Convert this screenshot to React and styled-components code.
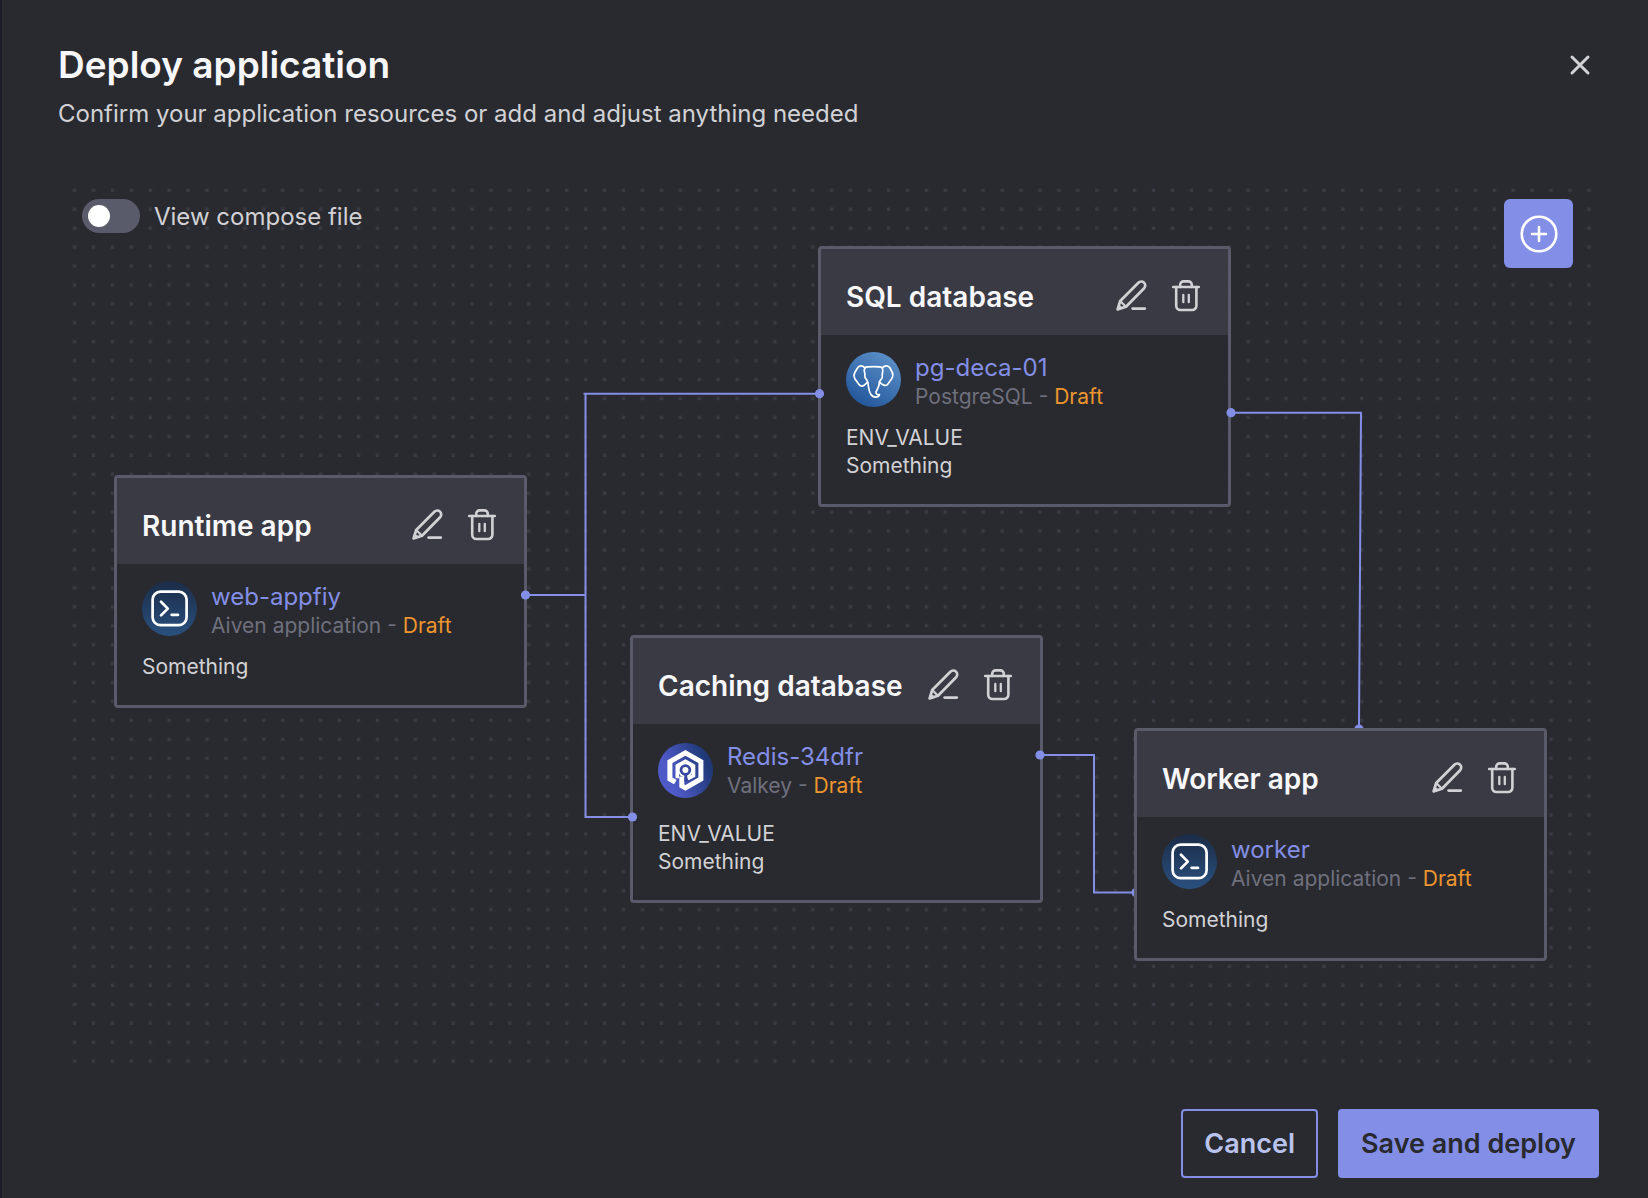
import React, { useId } from "react";
import styled, { createGlobalStyle } from "styled-components";

const color = {
  backdrop: "#1d1d29",
  surface: "#292a2f",
  header: "#3a3a44",
  border: "#5a5b6a",
  dot: "#3a3a44",
  accent: "#838ee6",
  accentSoft: "#b9c3ee",
  heading: "#f7f7fa",
  text: "#d2d2d6",
  muted: "#6f707d",
  draft: "#ee962e",
};

const GlobalStyle = createGlobalStyle`
  *, *::before, *::after { box-sizing: border-box; }
  body {
    margin: 0;
    background: ${color.surface};
    font-family: Inter, "Liberation Sans", sans-serif;
    color: ${color.text};
  }
  h1, h2, p, ul { margin: 0; padding: 0; }
  button { font: inherit; cursor: pointer; }
`;

const Dialog = styled.main`
  display: flex;
  flex-direction: column;
  min-height: 100vh;
  padding: 45px 49px 20px 56px;
  border-left: 2px solid ${color.backdrop};
  background: ${color.surface};
`;

const DialogHeader = styled.header`
  display: flex;
  align-items: flex-start;
  justify-content: space-between;
`;

const Title = styled.h1`
  font-size: 37px;
  line-height: 40px;
  font-weight: 600;
  color: ${color.heading};
`;

const Subtitle = styled.p`
  margin-top: 13px;
  font-size: 24px;
  line-height: 32px;
`;

const IconButton = styled.button`
  display: inline-flex;
  padding: 0;
  border: 0;
  background: none;
  color: ${color.text};
`;

const CloseButton = styled(IconButton)`
  margin: 4px 3px 0 0;
`;

const Canvas = styled.section`
  position: relative;
  height: 890px;
  margin: 51px 1px 0 7px;
  padding: 18px 25px 0 17px;
`;

const DotGrid = styled.svg`
  position: absolute;
  inset: 0;
  width: 100%;
  height: 100%;
`;

const Toolbar = styled.div`
  position: relative;
  display: flex;
  align-items: flex-start;
  justify-content: space-between;
`;

const SwitchLabel = styled.label`
  display: flex;
  align-items: flex-start;
  gap: 14px;
  font-size: 24px;
  line-height: 36px;
  cursor: pointer;
`;

const Switch = styled.input`
  appearance: none;
  display: flex;
  align-items: center;
  width: 58px;
  height: 34px;
  margin: 0;
  padding: 0 6px;
  border-radius: 17px;
  background: ${color.border};
  cursor: pointer;

  &::before {
    content: "";
    width: 22px;
    height: 22px;
    border-radius: 50%;
    background: #fff;
  }
  &:checked {
    justify-content: flex-end;
    background: ${color.accent};
  }
`;

const AddButton = styled(IconButton)`
  align-items: center;
  justify-content: center;
  width: 69px;
  height: 69px;
  border-radius: 6px;
  background: ${color.accent};
  color: #fff;
`;

const Connectors = styled.svg`
  position: absolute;
  inset: 0;
  width: 100%;
  height: 100%;
  pointer-events: none;
`;

const Node = styled.article`
  position: absolute;
  left: ${(p) => p.$x}px;
  top: ${(p) => p.$y}px;
  width: 413px;
  padding-bottom: 24px;
  border: 3px solid ${color.border};
  border-radius: 4px;
  background: ${color.surface};
`;

const NodeHeader = styled.header`
  display: flex;
  align-items: center;
  height: 86px;
  padding: 10px 24px 0 25px;
  gap: 20px;
  background: ${color.header};
`;

const NodeTitle = styled.h2`
  flex: 1;
  font-size: 28px;
  line-height: 36px;
  font-weight: 600;
  white-space: nowrap;
  color: ${color.heading};
`;

const NodeBody = styled.div`
  display: flex;
  flex-direction: column;
  gap: ${(p) => (p.$roomy ? 21 : 14)}px;
  padding: 17px 25px 0;
`;

const Service = styled.div`
  display: flex;
  align-items: ${(p) => (p.$roomy ? "center" : "flex-start")};
  gap: 14px;
`;

const ServiceName = styled.a`
  display: block;
  font-size: 24px;
  line-height: 32px;
  color: ${color.accent};
  text-decoration: none;
`;

const ServiceKind = styled.p`
  font-size: 21px;
  line-height: 26px;
  color: ${color.muted};
`;

const Draft = styled.span`
  color: ${color.draft};
`;

const Values = styled.ul`
  list-style: none;
  font-size: 21px;
  line-height: 28px;
`;

const DialogFooter = styled.footer`
  display: flex;
  justify-content: flex-end;
  gap: 20px;
  margin-top: 38px;
`;

const Button = styled.button`
  height: 69px;
  padding: 0 21px;
  border: 2px solid ${color.accent};
  border-radius: 4px;
  font-size: 27px;
  font-weight: 600;
  background: ${(p) => (p.$primary ? color.accent : "transparent")};
  color: ${(p) => (p.$primary ? color.surface : color.accentSoft)};
`;

const CloseIcon = () => (
  <svg width="32" height="32" viewBox="0 0 32 32" fill="none" stroke="currentColor" strokeWidth="3" strokeLinecap="round" aria-hidden="true">
    <path d="M8 8 24 24M24 8 8 24" />
  </svg>
);

const PlusIcon = () => (
  <svg width="42" height="42" viewBox="0 0 42 42" fill="none" stroke="currentColor" strokeWidth="2.6" strokeLinecap="round" aria-hidden="true">
    <circle cx="21" cy="21" r="17.3" />
    <path d="M21 14v14M14 21h14" />
  </svg>
);

const PencilIcon = () => (
  <svg width="36" height="36" viewBox="0 0 36 36" fill="none" stroke="currentColor" strokeWidth="2.7" strokeLinecap="round" strokeLinejoin="round" aria-hidden="true">
    <path d="M5.6 30.4 8.2 22 26.4 3.7a3.9 3.9 0 0 1 5.7 5.5L14 27.8Z" />
    <path d="M8.2 22 14 27.8" strokeWidth="2.2" />
    <path d="M5.6 30.4 7 26l3.6 3Z" fill="currentColor" strokeWidth="1" />
    <path d="M20.6 29.6h12.2" />
  </svg>
);

const TrashIcon = () => (
  <svg width="36" height="36" viewBox="0 0 36 36" fill="none" stroke="currentColor" strokeWidth="2.6" strokeLinecap="round" strokeLinejoin="round" aria-hidden="true">
    <path d="M5.2 8h25.6" />
    <path d="M12.2 8V5.8a3.4 3.4 0 0 1 3.4-3.4h4.8a3.4 3.4 0 0 1 3.4 3.4V8" />
    <path d="M8.2 8v18.8a4.2 4.2 0 0 0 4.2 4.2h11.8a4.2 4.2 0 0 0 4.2-4.2V8" />
    <path d="M15.3 16v7.2M20.8 16v7.2" strokeWidth="2.3" />
  </svg>
);

function TerminalLogo() {
  const id = useId();
  return (
    <svg width="55" height="55" viewBox="0 0 55 55" fill="none" aria-hidden="true">
      <defs>
        <linearGradient id={id} x1="0" y1="0" x2="0" y2="1">
          <stop offset="0" stopColor="#1b2c47" />
          <stop offset="1" stopColor="#2a507f" />
        </linearGradient>
      </defs>
      <circle cx="27.5" cy="27.5" r="27.5" fill={`url(#${id})`} />
      <g stroke="#fff" strokeWidth="2.7" strokeLinecap="round" strokeLinejoin="round">
        <rect x="10.6" y="10.6" width="34" height="33.6" rx="8" />
        <path d="m19 20.8 6.8 6.8-6.8 6.8M29.6 33.8h6.4" />
      </g>
    </svg>
  );
}

function PostgresLogo() {
  const id = useId();
  return (
    <svg width="55" height="55" viewBox="0 0 55 55" fill="none" aria-hidden="true">
      <defs>
        <linearGradient id={id} x1="0.8" y1="0.05" x2="0.25" y2="0.95">
          <stop offset="0" stopColor="#5a8fc8" />
          <stop offset="1" stopColor="#23579b" />
        </linearGradient>
      </defs>
      <circle cx="27.5" cy="27.5" r="27.5" fill={`url(#${id})`} />
      <g stroke="#fff" strokeWidth="1.7" strokeLinecap="round" strokeLinejoin="round">
        <path d="M18.5 15.5C22 14.3 33 14.3 36.5 15.5" />
        <path d="M19 16C16 12.8 13 13.5 11.5 16L8.8 20.5C7.5 22.8 8 25 9 27L13 32.5C14.5 34.5 16.5 34.5 18.5 33L21.3 30.3" />
        <path d="M19 16C17 18.5 19.5 20.5 18.8 23.5C18.5 26.5 21.5 27.5 21.8 30.5C22.5 33.5 22.6 39.5 25 42.5C27 45.8 32.5 46 33.5 42.5C31 43 29.8 42 30 40C31.5 37 33.5 34 33.5 30" />
        <path d="M36.3 16C39 12.8 42.5 13.5 44 16L46.3 20.5C47.5 22.8 46.7 25 45.5 27L41.5 32.5C40 34.5 36 33 33.5 30" />
        <path d="M36.3 16C38 19.5 35.5 21.5 36.3 24.5C36.8 27.5 33.8 27.5 33.5 30" />
      </g>
    </svg>
  );
}

function ValkeyLogo() {
  const id = useId();
  return (
    <svg width="55" height="55" viewBox="0 0 55 55" fill="none" aria-hidden="true">
      <defs>
        <linearGradient id={id} x1="0.1" y1="0.7" x2="0.95" y2="0.35">
          <stop offset="0.15" stopColor="#4f5ac9" />
          <stop offset="1" stopColor="#1d3872" />
        </linearGradient>
      </defs>
      <circle cx="27.5" cy="27.5" r="27.5" fill={`url(#${id})`} />
      <path d="M17.3 39.2 11.9 36V18.7L27.4 9.9 42.9 18.7V36L27.4 44.9 23.8 42.9V33.5" stroke="#fff" strokeWidth="5" />
      <path d="M19.3 35.2V22.8L27.4 18.2 35.5 22.8V32.6L29.8 35.8" stroke="#fff" strokeWidth="3.6" />
      <circle cx="27.4" cy="27" r="7.3" fill="#fff" />
      <circle cx="27.4" cy="27" r="4.4" stroke="#38479f" strokeWidth="2.8" />
      <path d="M27.8 31.5v7" stroke="#38479f" strokeWidth="2.8" />
    </svg>
  );
}

const logos = { app: TerminalLogo, postgres: PostgresLogo, valkey: ValkeyLogo };

const nodes = [
  { title: "Runtime app", x: 49, y: 294, logo: "app", name: "web-appfiy", kind: "Aiven application", values: ["Something"] },
  { title: "SQL database", x: 753, y: 65, logo: "postgres", name: "pg-deca-01", kind: "PostgreSQL", values: ["ENV_VALUE", "Something"] },
  { title: "Caching database", x: 565, y: 454, logo: "valkey", name: "Redis-34dfr", kind: "Valkey", values: ["ENV_VALUE", "Something"], roomy: true },
];

const worker = { title: "Worker app", x: 1069, y: 547, logo: "app", name: "worker", kind: "Aiven application", values: ["Something"] };

function ResourceNode({ title, x, y, logo, name, kind, values, roomy }) {
  const Logo = logos[logo];
  return (
    <Node $x={x} $y={y}>
      <NodeHeader>
        <NodeTitle>{title}</NodeTitle>
        <IconButton type="button" aria-label={`Edit ${title}`}><PencilIcon /></IconButton>
        <IconButton type="button" aria-label={`Delete ${title}`}><TrashIcon /></IconButton>
      </NodeHeader>
      <NodeBody $roomy={roomy}>
        <Service $roomy={roomy}>
          <Logo />
          <div>
            <ServiceName href="#">{name}</ServiceName>
            <ServiceKind>{kind} - <Draft>Draft</Draft></ServiceKind>
          </div>
        </Service>
        <Values>
          {values.map((v) => <li key={v}>{v}</li>)}
        </Values>
      </NodeBody>
    </Node>
  );
}

export default function App() {
  return (
    <>
      <GlobalStyle />
      <Dialog>
        <DialogHeader>
          <div>
            <Title>Deploy application</Title>
            <Subtitle>Confirm your application resources or add and adjust anything needed</Subtitle>
          </div>
          <CloseButton type="button" aria-label="Close"><CloseIcon /></CloseButton>
        </DialogHeader>

        <Canvas aria-label="Application resources">
          <DotGrid aria-hidden="true">
            <pattern id="dots" width="18.93" height="18.93" patternUnits="userSpaceOnUse">
              <rect x="7.8" y="7.6" width="3.4" height="3.4" fill={color.dot} />
            </pattern>
            <rect width="100%" height="100%" fill="url(#dots)" />
          </DotGrid>
          <Toolbar>
            <SwitchLabel htmlFor="compose">
              <Switch id="compose" type="checkbox" role="switch" />
              View compose file
            </SwitchLabel>
            <AddButton type="button" aria-label="Add resource"><PlusIcon /></AddButton>
          </Toolbar>
          {nodes.map((n) => <ResourceNode key={n.title} {...n} />)}
          <Connectors aria-hidden="true">
            <g fill="none" stroke={color.accent} strokeWidth="2">
              <path d="M460 414H520.5M754 212.7H518.5M520.5 212.7V636H567" />
              <path d="M1166 231.7H1296L1294 546" />
              <path d="M975 574H1029V711.6H1070" />
            </g>
            <g fill={color.accent}>
              <circle cx="460.5" cy="414" r="4.6" />
              <circle cx="754.5" cy="212.7" r="4.6" />
              <circle cx="567.5" cy="636" r="4.6" />
              <circle cx="1166" cy="231.7" r="4.6" />
              <circle cx="975" cy="574" r="4.6" />
              <circle cx="1294" cy="548" r="4.6" />
              <circle cx="1071" cy="711.6" r="4.6" />
            </g>
          </Connectors>
          <ResourceNode {...worker} />
        </Canvas>

        <DialogFooter>
          <Button type="button">Cancel</Button>
          <Button type="button" $primary>Save and deploy</Button>
        </DialogFooter>
      </Dialog>
    </>
  );
}
